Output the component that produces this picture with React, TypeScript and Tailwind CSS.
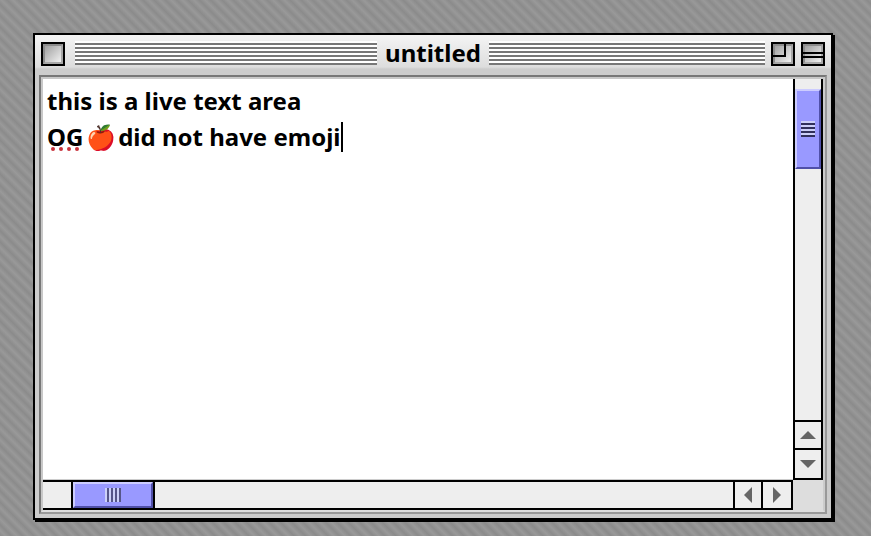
import { useState } from "react";

const buttonClass = "flex items-center justify-center bg-[#eeeeee]";

export default function App() {
  const [text, setText] = useState(
    "this is a live text area\nOG\u200a🍎\u200adid not have emoji"
  );
  const [edited, setEdited] = useState(false);

  return (
    <div className="flex h-screen bg-[repeating-linear-gradient(45deg,#8b8b8b_0px,#999999_4px,#8b8b8b_8px)] pt-[33px] pr-[38px] pb-4 pl-[33px] font-['Noto_Sans',sans-serif] text-2xl font-bold text-black">
      <div className="flex flex-1 flex-col border-2 border-black bg-[#cccccc] shadow-[2px_2px_0_#000]">
        <TitleBar title="untitled" />
        <div className="mx-1 mb-1 flex flex-1 border-2 border-t-[#777777] border-r-[#999999] border-b-[#999999] border-l-[#777777]">
          <div className="grid flex-1 grid-cols-[1fr_30px] grid-rows-[1fr_30px] border-2 border-t-[#c8c8c8] border-r-[#cccccc] border-b-[#dddddd] border-l-[#c8c8c8]">
            <div className="relative flex">
              <textarea
                aria-label="Document text"
                className="flex-1 resize-none overflow-hidden border-b border-[#cccccc] bg-white px-1 pt-1 leading-9 outline-none"
                spellCheck={false}
                value={text}
                onChange={(e) => {
                  setText(e.target.value);
                  setEdited(true);
                }}
              />
              {!edited && (
                <>
                  <SpellDots />
                  <div className="pointer-events-none absolute top-[43px] left-[298px] h-[30px] w-0.5 bg-black" />
                </>
              )}
            </div>
            <VerticalBar />
            <HorizontalBar />
            <div className="bg-[#dddddd]" />
          </div>
        </div>
      </div>
    </div>
  );
}

function TitleBar({ title }: { title: string }) {
  return (
    <div className="grid h-10 grid-cols-[1fr_auto_1fr] items-start bg-[linear-gradient(#f4f4f4,#dddddd_32px,#cccccc_34px)] px-1.5 pt-1.5">
      <div className="flex items-start gap-2.5">
        <button aria-label="Close" className="mt-px">
          <WindowBox />
        </button>
        <Stripes />
      </div>
      <h1 className="px-2 leading-6">{title}</h1>
      <div className="flex items-start gap-1.5">
        <Stripes />
        <button aria-label="Zoom" className="mt-px">
          <WindowBox>
            <path d="M0 14H14V0" />
          </WindowBox>
        </button>
        <button aria-label="Collapse" className="mt-px">
          <WindowBox>
            <path d="M0 11H24M0 15H24" />
          </WindowBox>
        </button>
      </div>
    </div>
  );
}

function Stripes() {
  return (
    <div className="h-6 flex-1 bg-[repeating-linear-gradient(#ffffff_0px_2px,#777777_2px_4px)]" />
  );
}

function WindowBox({ children }: { children?: React.ReactNode }) {
  return (
    <svg className="block" width="24" height="24" viewBox="0 0 24 24">
      <defs>
        <linearGradient id="box" x1="0" y1="0" x2="1" y2="1">
          <stop offset="0" stopColor="#a0a0a0" />
          <stop offset="1" stopColor="#f0f0f0" />
        </linearGradient>
      </defs>
      <rect width="24" height="24" fill="#000000" />
      <rect x="2" y="2" width="20" height="20" fill="#8c8c8c" />
      <path d="M22 2V22H2L4 20H20V4Z" fill="#a8a8a8" />
      <rect x="4" y="4" width="16" height="16" fill="url(#box)" />
      <g fill="none" stroke="#000000" strokeWidth="2">
        {children}
      </g>
    </svg>
  );
}

// red dots under a misspelled word
function SpellDots() {
  return (
    <svg
      className="pointer-events-none absolute top-[68px] left-2"
      width="28"
      height="4"
      viewBox="0 0 28 4"
      fill="#c8323c"
    >
      <circle cx="2" cy="2" r="2" />
      <circle cx="10" cy="2" r="2" />
      <circle cx="18" cy="2" r="2" />
      <circle cx="26" cy="2" r="2" />
    </svg>
  );
}

function VerticalBar() {
  return (
    <div className="flex flex-col border-x-2 border-b-2 border-black bg-[#eeeeee]">
      <div className="mt-2.5 flex h-20 items-center justify-center border-2 border-t-[#ccccff] border-r-[#5050a8] border-b-[#5050a8] border-l-[#ccccff] bg-[#9999ff]">
        <div className="h-4 w-3.5 bg-[repeating-linear-gradient(#ccd0f8_0px_2px,#30305c_2px_4px)]" />
      </div>
      <div className="flex-1" />
      <button
        aria-label="Scroll up"
        className={`h-7 border-t-2 border-black ${buttonClass}`}
      >
        <Arrow d="M0 12L8 4L16 12Z" />
      </button>
      <button
        aria-label="Scroll down"
        className={`h-[30px] border-t-2 border-black ${buttonClass}`}
      >
        <Arrow d="M0 4H16L8 12Z" />
      </button>
    </div>
  );
}

function HorizontalBar() {
  return (
    <div className="flex border-y-2 border-r-2 border-black bg-[#eeeeee]">
      <div className="ml-7 border-x-2 border-black">
        <div className="flex h-full w-20 items-center justify-center border-2 border-t-[#ccccff] border-r-[#5050a8] border-b-[#5050a8] border-l-[#ccccff] bg-[#9999ff]">
          <div className="h-3.5 w-4 bg-[repeating-linear-gradient(90deg,#ccd0f8_0px_2px,#555588_2px_4px)]" />
        </div>
      </div>
      <div className="flex-1" />
      <button
        aria-label="Scroll left"
        className={`w-7 border-l-2 border-black ${buttonClass}`}
      >
        <Arrow d="M12 0V16L4 8Z" />
      </button>
      <button
        aria-label="Scroll right"
        className={`w-[30px] border-l-2 border-black ${buttonClass}`}
      >
        <Arrow d="M4 0L12 8L4 16Z" />
      </button>
    </div>
  );
}

function Arrow({ d }: { d: string }) {
  return (
    <svg width="16" height="16" viewBox="0 0 16 16" fill="#666666">
      <path d={d} />
    </svg>
  );
}
